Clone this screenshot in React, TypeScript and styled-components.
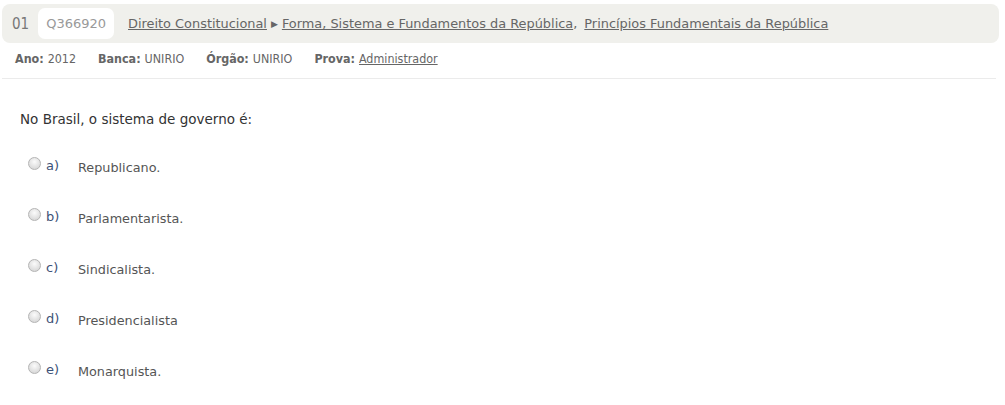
import React from "react";
import styled, { createGlobalStyle } from "styled-components";

const Global = createGlobalStyle`
  html, body { margin: 0; padding: 0; background: #fff; }
  body { font-family: "DejaVu Sans", sans-serif; }
`;

const Page = styled.div`
  width: 1005px;
  padding: 4px 6px 0 2px;
  box-sizing: border-box;
`;

const HeaderBar = styled.div`
  display: flex;
  align-items: center;
  height: 39px;
  background: #f0f0ec;
  border-radius: 8px;
  padding: 0 0 0 10px;
  font-size: 12.9px;
`;

const Number = styled.span`
  color: #777;
  font-family: "DejaVu Sans Condensed", "DejaVu Sans", sans-serif;
  font-size: 15px;
  margin-right: 9px;
`;

const Code = styled.span`
  display: inline-flex;
  align-items: center;
  height: 31px;
  padding: 0 8px;
  background: #fff;
  border-radius: 7px;
  color: #999;
  font-size: 13px;
  margin-right: 14px;
`;

const Link = styled.a`
  color: #666;
  text-decoration: underline;
  cursor: pointer;
`;

const Arrow = styled.span`
  color: #666;
  font-size: 9px;
  margin: 0 4px;
`;

const Comma = styled.span`
  color: #666;
  margin-right: 7px;
`;

const Meta = styled.div`
  display: flex;
  gap: 22px;
  padding: 0 0 5px 13px;
  height: 36px;
  box-sizing: border-box;
  align-items: center;
  font-family: "DejaVu Sans Condensed", "DejaVu Sans", sans-serif;
  font-size: 12.4px;
  color: #666;
  border-bottom: 1px solid #ebebeb;
  margin-right: 3px;
`;

const MetaItem = styled.span`
  b { color: #666; margin-right: 4px; }
`;

const Body = styled.div`
  padding: 32px 0 0 18px;
`;

const Question = styled.p`
  margin: 0 0 31px 0;
  font-size: 13.5px;
  color: #333;
`;

const Options = styled.div`
  display: flex;
  flex-direction: column;
  gap: 32px;
`;

const Option = styled.label`
  display: flex;
  align-items: center;
  height: 19px;
  padding-left: 8px;
`;

const Radio = styled.span`
  width: 13px;
  height: 13px;
  border-radius: 50%;
  border: 1px solid #b4b4b4;
  background: radial-gradient(circle at 50% 35%, #fbfbfb, #dadada 75%);
  box-sizing: border-box;
  margin-right: 5px;
  position: relative;
  top: -4px;
`;

const Letter = styled.span`
  width: 32px;
  font-size: 13px;
  color: #3d5277;
  position: relative;
  top: -2px;
`;

const OptionText = styled.span`
  font-size: 12.8px;
  color: #555;
`;

const options = [
  ["a)", "Republicano."],
  ["b)", "Parlamentarista."],
  ["c)", "Sindicalista."],
  ["d)", "Presidencialista"],
  ["e)", "Monarquista."],
];

export default function App() {
  return (
    <Page>
      <Global />
      <HeaderBar>
        <Number>01</Number>
        <Code>Q366920</Code>
        <Link>Direito Constitucional</Link>
        <Arrow>▶</Arrow>
        <Link>Forma, Sistema e Fundamentos da República</Link>
        <Comma>,</Comma>
        <Link>Princípios Fundamentais da República</Link>
      </HeaderBar>
      <Meta>
        <MetaItem><b>Ano:</b>2012</MetaItem>
        <MetaItem><b>Banca:</b>UNIRIO</MetaItem>
        <MetaItem><b>Órgão:</b>UNIRIO</MetaItem>
        <MetaItem><b>Prova:</b><Link>Administrador</Link></MetaItem>
      </Meta>
      <Body>
        <Question>No Brasil, o sistema de governo é:</Question>
        <Options>
          {options.map(([l, t]) => (
            <Option key={l}>
              <Radio />
              <Letter>{l}</Letter>
              <OptionText>{t}</OptionText>
            </Option>
          ))}
        </Options>
      </Body>
    </Page>
  );
}
